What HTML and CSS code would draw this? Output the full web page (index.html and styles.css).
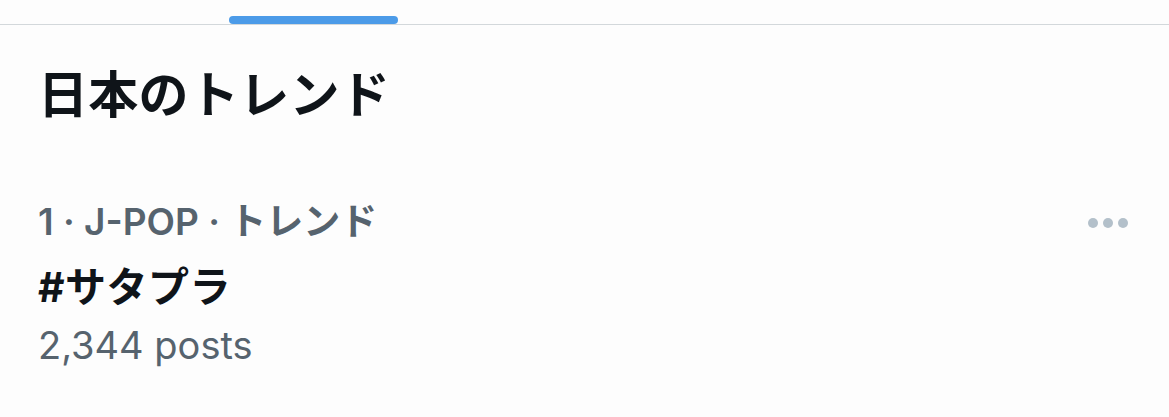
FILE: index.html
```html
<!DOCTYPE html>
<html lang="ja">
<head>
<meta charset="utf-8">
<link rel="stylesheet" href="styles.css">
</head>
<body>
<div class="tabs">
  <div class="tab"><span class="indicator"></span></div>
</div>
<main class="page">
  <h1 class="title">日本のトレンド</h1>
  <section class="trend">
    <div class="trend-body">
      <div class="meta">1 · J-POP · トレンド</div>
      <div class="name">#サタプラ</div>
      <div class="count">2,344 posts</div>
    </div>
    <div class="more" aria-label="more">
      <span class="dot"></span><span class="dot"></span><span class="dot"></span>
    </div>
  </section>
</main>
</body>
</html>
```
FILE: styles.css
```css
html, body {
  margin: 0;
  padding: 0;
  background: #fdfdfd;
}
body {
  font-family: "Inter", "Noto Sans CJK JP", sans-serif;
  color: #0f1419;
  width: 1169px;
  height: 417px;
  overflow: hidden;
}
.tabs {
  height: 24px;
  border-bottom: 1px solid #d3d8db;
  display: flex;
  padding-left: 229px;
}
.tab {
  display: flex;
  align-items: flex-end;
}
.indicator {
  display: block;
  width: 169px;
  height: 8px;
  border-radius: 4px;
  background: #4c9be8;
}
.page {
  padding: 0 38px 0 38px;
}
.title {
  margin: 0;
  padding-top: 36px;
  font-size: 50px;
  font-weight: 700;
  line-height: 68px;
  letter-spacing: 0.3px;
  padding-left: 0;
}
.trend {
  display: flex;
  justify-content: space-between;
  align-items: flex-start;
  margin-top: 70px;
}
.meta {
  font-size: 37px;
  line-height: 46px;
  font-weight: 600;
  color: #56636e;
}
.name {
  font-size: 41px;
  line-height: 56px;
  font-weight: 700;
  color: #0f1419;
  margin-top: 14px;
  letter-spacing: 0.5px;
}
.count {
  font-size: 38px;
  line-height: 50px;
  color: #56636e;
  margin-top: 5px;
}
.more {
  display: flex;
  gap: 5px;
  padding-top: 19px;
  padding-right: 3px;
}
.dot {
  width: 10px;
  height: 10px;
  border-radius: 50%;
  background: #b3c0ca;
}
```
